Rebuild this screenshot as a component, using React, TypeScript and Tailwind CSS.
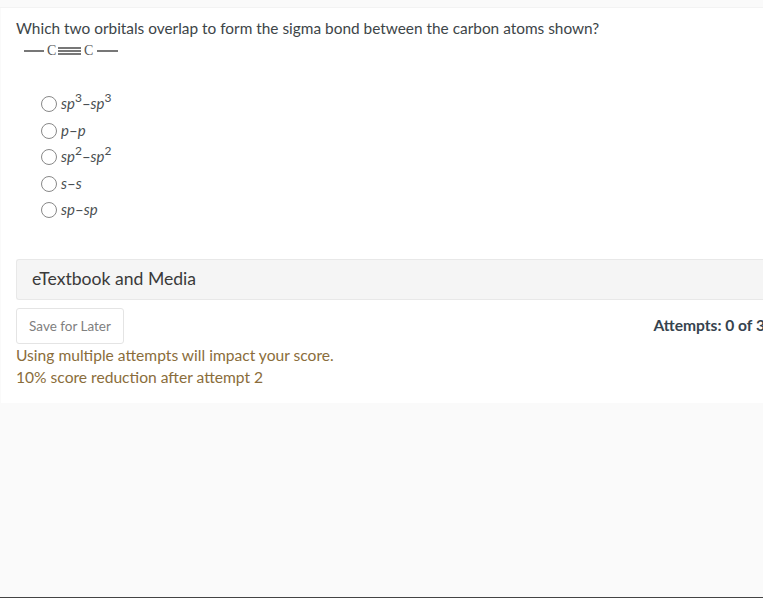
import React from 'react';

const options = [
  { id: 'a', left: 'sp', leftSup: '3', right: 'sp', rightSup: '3' },
  { id: 'b', left: 'p', right: 'p' },
  { id: 'c', left: 'sp', leftSup: '2', right: 'sp', rightSup: '2' },
  { id: 'd', left: 's', right: 's' },
  { id: 'e', left: 'sp', right: 'sp' },
];

const Sup = ({ children }: { children: React.ReactNode }) => (
  <sup className="text-[12px] not-italic leading-none relative top-[-1px] align-super">{children}</sup>
);

export default function App() {
  return (
    <div className="h-[598px] w-[763px] overflow-hidden flex flex-col bg-[#fafafa] font-['Lato','Open_Sans',sans-serif]">
      <div className="h-[8px] shrink-0 bg-[#fafafa] border-b border-[#f3f3f3]" />

      <div className="w-[800px] ml-[1px] shrink-0 h-[395px] bg-white pl-[15px] flex flex-col">
        <p className="mt-[8px] text-[15.4px] leading-[24px] text-[#3d4548]">
          Which two orbitals overlap to form the sigma bond between the carbon atoms shown?
        </p>

        <div className="mt-[2px] ml-[8px] h-[18px] flex items-center text-[#555] font-['Liberation_Serif',serif] text-[14px]">
          <div className="w-[20px] h-[2px] bg-[#777]" />
          <span className="ml-[3px] w-[9px] leading-none">C</span>
          <div className="ml-[2px] w-[23px] flex flex-col gap-[1.5px]">
            <div className="h-[1.5px] bg-[#777]" />
            <div className="h-[1.5px] bg-[#777]" />
            <div className="h-[1.5px] bg-[#777]" />
          </div>
          <span className="ml-[3px] w-[9px] leading-none">C</span>
          <div className="ml-[4px] w-[21px] h-[2px] bg-[#777]" />
        </div>

        <div className="mt-[33px] ml-[25px] flex flex-col gap-[4.5px]">
          {options.map((o) => (
            <label key={o.id} className="h-[22px] flex items-center text-[15px] text-[#4a4f52]">
              <span className="w-[16px] h-[16px] rounded-full border-[1.5px] border-[#888] bg-white shrink-0" />
              <span className="ml-[4px] leading-[22px] whitespace-nowrap relative top-[-1px]">
                <i>{o.left}</i>
                {o.leftSup && <Sup>{o.leftSup}</Sup>}
                <span>–</span>
                <i>{o.right}</i>
                {o.rightSup && <Sup>{o.rightSup}</Sup>}
              </span>
            </label>
          ))}
        </div>

        <div className="mt-[38px] h-[41px] flex items-center pl-[15px] bg-[#f5f5f5] border border-[#e8e8e8] border-r-0 rounded-l-[3px] text-[17.6px] text-[#3a3a3a]">
          eTextbook and Media
        </div>

        <div className="mt-[8px] flex items-center justify-between pr-[36px]">
          <button className="h-[36px] w-[108px] bg-white border border-[#e4e4e4] rounded-[3px] text-[13.5px] text-[#808080]">
            Save for Later
          </button>
          <span className="text-[15.6px] font-bold text-[#36434e] whitespace-nowrap">Attempts: 0 of 3</span>
        </div>

        <p className="text-[15.6px] leading-[22px] text-[#8a6d3b]">
          Using multiple attempts will impact your score.
          <br />
          10% score reduction after attempt 2
        </p>
      </div>

      <div className="flex-1" />
      <div className="h-[1px] shrink-0 bg-[#444]" />
    </div>
  );
}
